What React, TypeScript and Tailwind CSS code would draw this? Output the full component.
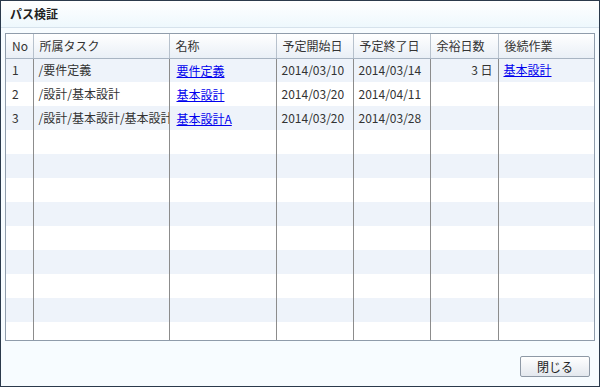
import React from 'react'

const font = { fontFamily: '"Noto Sans CJK JP", "Noto Sans", sans-serif' }

const cols = [
  { label: 'No', w: 'w-[27px]' },
  { label: '所属タスク', w: 'w-[136px]' },
  { label: '名称', w: 'w-[107px]' },
  { label: '予定開始日', w: 'w-[77px]' },
  { label: '予定終了日', w: 'w-[77px]' },
  { label: '余裕日数', w: 'w-[68px]' },
  { label: '後続作業', w: 'w-[97px]' },
]

const rows = [
  { no: '1', path: '/要件定義', name: '要件定義', start: '2014/03/10', end: '2014/03/14', days: '3 日', next: '基本設計' },
  { no: '2', path: '/設計/基本設計', name: '基本設計', start: '2014/03/20', end: '2014/04/11', days: '', next: '' },
  { no: '3', path: '/設計/基本設計/基本設計A', name: '基本設計A', start: '2014/03/20', end: '2014/03/28', days: '', next: '' },
]

const App = () => {
  const empty = Array.from({ length: 10 })
  return (
    <div className="w-[600px] h-[387px] border border-[#2b3a4c] bg-[#f7fcff] flex flex-col text-[#333] text-[12px]" style={font}>
      {/* title */}
      <div className="h-[27px] shrink-0 flex items-center px-[9px] bg-gradient-to-b from-[#ffffff] to-[#eef8fd] border-b border-[#d6e2ec]">
        <p className="font-bold text-[12px] text-[#222]">パス検証</p>
      </div>

      {/* grid */}
      <div className="mx-[4px] mt-[5px] h-[308px] border border-[#8f9cab] bg-white overflow-hidden">
        <table className="table-fixed border-collapse w-[587px]">
          <colgroup>
            {cols.map((c) => (
              <col key={c.label} className={c.w} />
            ))}
          </colgroup>
          <thead>
            <tr className="h-[24px] bg-gradient-to-b from-[#ffffff] to-[#e9eff6]">
              {cols.map((c, i) => (
                <th
                  key={c.label}
                  className={`font-normal text-left px-[6px] border-b border-[#a8b4c2] ${i < cols.length - 1 ? 'border-r border-r-[#b7c1cc]' : ''}`}
                >
                  {c.label}
                </th>
              ))}
            </tr>
          </thead>
          <tbody>
            {rows.map((r, i) => (
              <tr key={r.no} className={`h-[24px] ${i % 2 === 0 ? 'bg-[#eef3fa]' : 'bg-white'}`}>
                <td className="px-[6px] border-r border-[#8c8c8c]">{r.no}</td>
                <td className="px-[5px] border-r border-[#8c8c8c] whitespace-nowrap overflow-hidden">{r.path}</td>
                <td className="px-[7px] border-r border-[#8c8c8c]">
                  <a className="text-[#0000ee] underline pt-[2px] inline-block">{r.name}</a>
                </td>
                <td className="px-[5px] border-r border-[#8c8c8c]">{r.start}</td>
                <td className="px-[5px] border-r border-[#8c8c8c]">{r.end}</td>
                <td className="px-[5px] border-r border-[#8c8c8c] text-right">{r.days}</td>
                <td className="px-[5px]">
                  {r.next && <a className="text-[#0000ee] underline">{r.next}</a>}
                </td>
              </tr>
            ))}
            {empty.map((_, i) => (
              <tr key={i} className={`h-[24px] ${(i + 3) % 2 === 0 ? 'bg-[#eef3fa]' : 'bg-white'}`}>
                {cols.map((c, j) => (
                  <td key={c.label} className={j < cols.length - 1 ? 'border-r border-[#8c8c8c]' : ''}></td>
                ))}
              </tr>
            ))}
          </tbody>
        </table>
      </div>

      {/* footer */}
      <div className="flex justify-end px-[9px] mt-[15px]">
        <button className="w-[70px] h-[21px] border border-[#8e99a6] rounded-[2px] bg-gradient-to-b from-[#ffffff] to-[#e3e8ee] text-[12px] text-[#222]">
          閉じる
        </button>
      </div>
    </div>
  )
}

export default App
